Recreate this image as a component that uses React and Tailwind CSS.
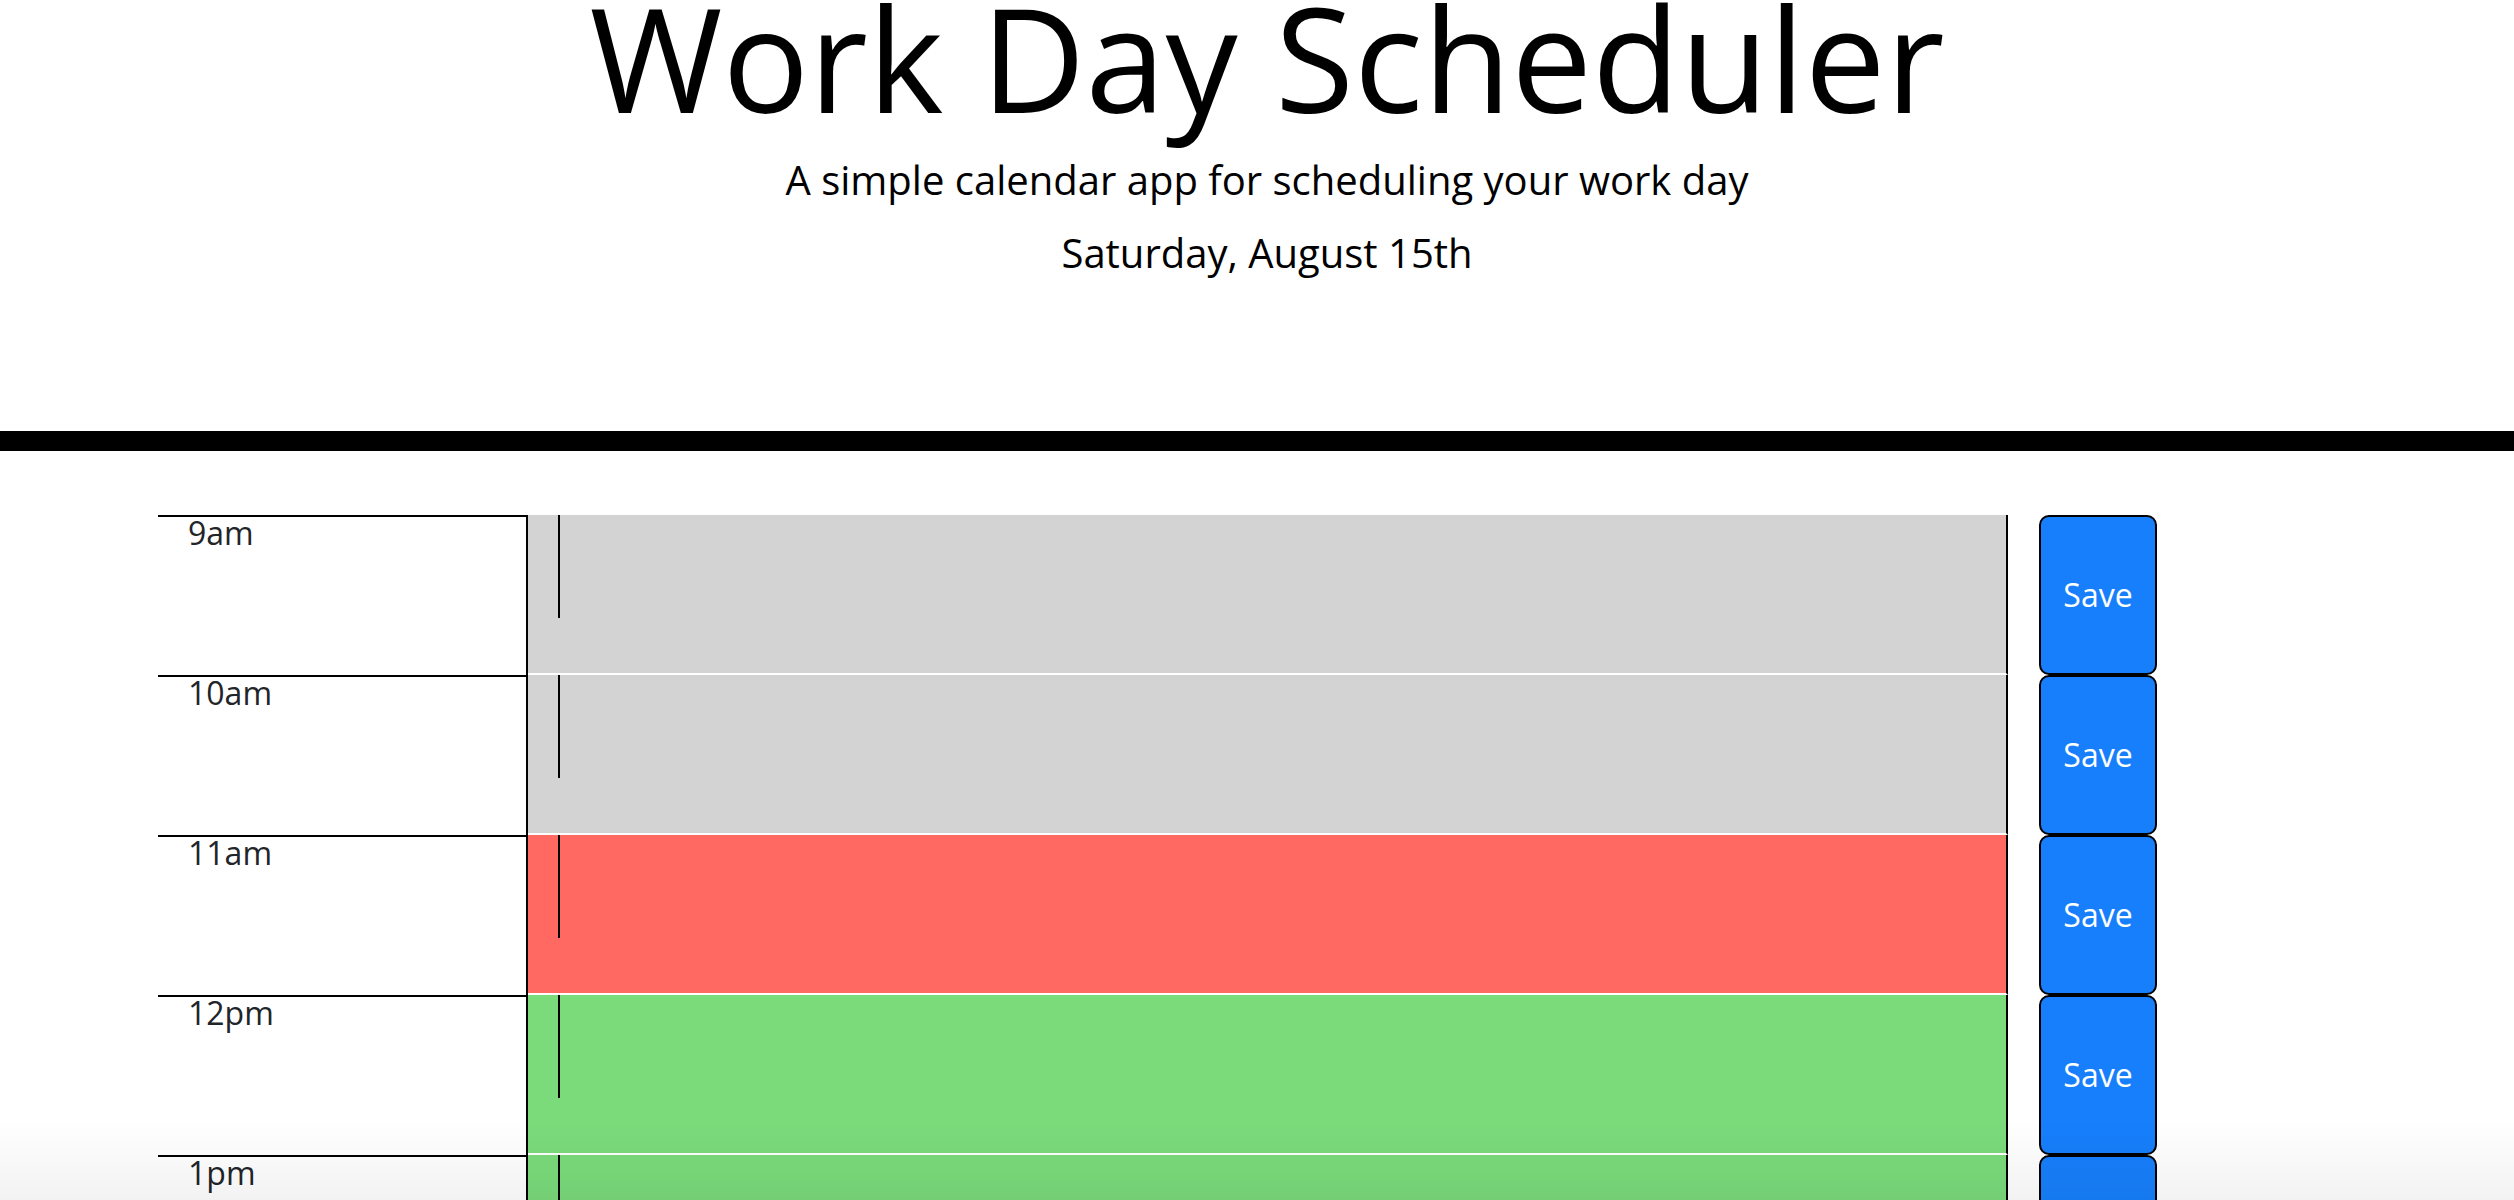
import React from 'react';

const HOURS = [
  { label: '9am', state: 'past' },
  { label: '10am', state: 'past' },
  { label: '11am', state: 'present' },
  { label: '12pm', state: 'future' },
  { label: '1pm', state: 'future' },
  { label: '2pm', state: 'future' },
  { label: '3pm', state: 'future' },
  { label: '4pm', state: 'future' },
  { label: '5pm', state: 'future' },
];

const stateBg = {
  past: 'bg-[#d3d3d3]',
  present: 'bg-[#ff6961]',
  future: 'bg-[#7bdb7b]',
};

function HourRow({ hour }) {
  return (
    <div className="flex h-[160px]">
      <div className="w-[370px] shrink-0 border-t-2 border-r-2 border-black pl-[30px] text-[32px] leading-none text-[#212529]">
        {hour.label}
      </div>
      <div className={`w-[1480px] shrink-0 border-r-2 border-b-2 border-r-black border-b-white pl-[30px] ${stateBg[hour.state]}`}>
        <div className="w-[2px] h-[103px] bg-black" />
      </div>
      <button className="ml-[31px] w-[118px] h-full shrink-0 rounded-[10px] border-2 border-black bg-[#177ffb] text-white text-[32px]">
        Save
      </button>
    </div>
  );
}

export default function App() {
  return (
    <div className="min-h-screen bg-white text-black" style={{ fontFamily: '"Open Sans", "Noto Sans", sans-serif' }}>
      <header className="flex flex-col items-center text-center pl-[20px]">
        <h1 className="mt-[-15px] text-[144px] font-normal leading-none">Work Day Scheduler</h1>
        <p className="mt-[31px] text-[40px] font-normal leading-none">A simple calendar app for scheduling your work day</p>
        <p className="mt-[33px] text-[40px] font-normal leading-none">Saturday, August 15th</p>
      </header>
      <div className="mt-[158px] h-[20px] bg-black" />
      <main className="mt-[64px] pl-[158px] pb-[80px]">
        {HOURS.map((h) => (
          <HourRow key={h.label} hour={h} />
        ))}
      </main>
      <div className="pointer-events-none fixed inset-x-0 bottom-0 h-[80px] bg-gradient-to-b from-black/0 to-black/[0.05]" />
    </div>
  );
}
